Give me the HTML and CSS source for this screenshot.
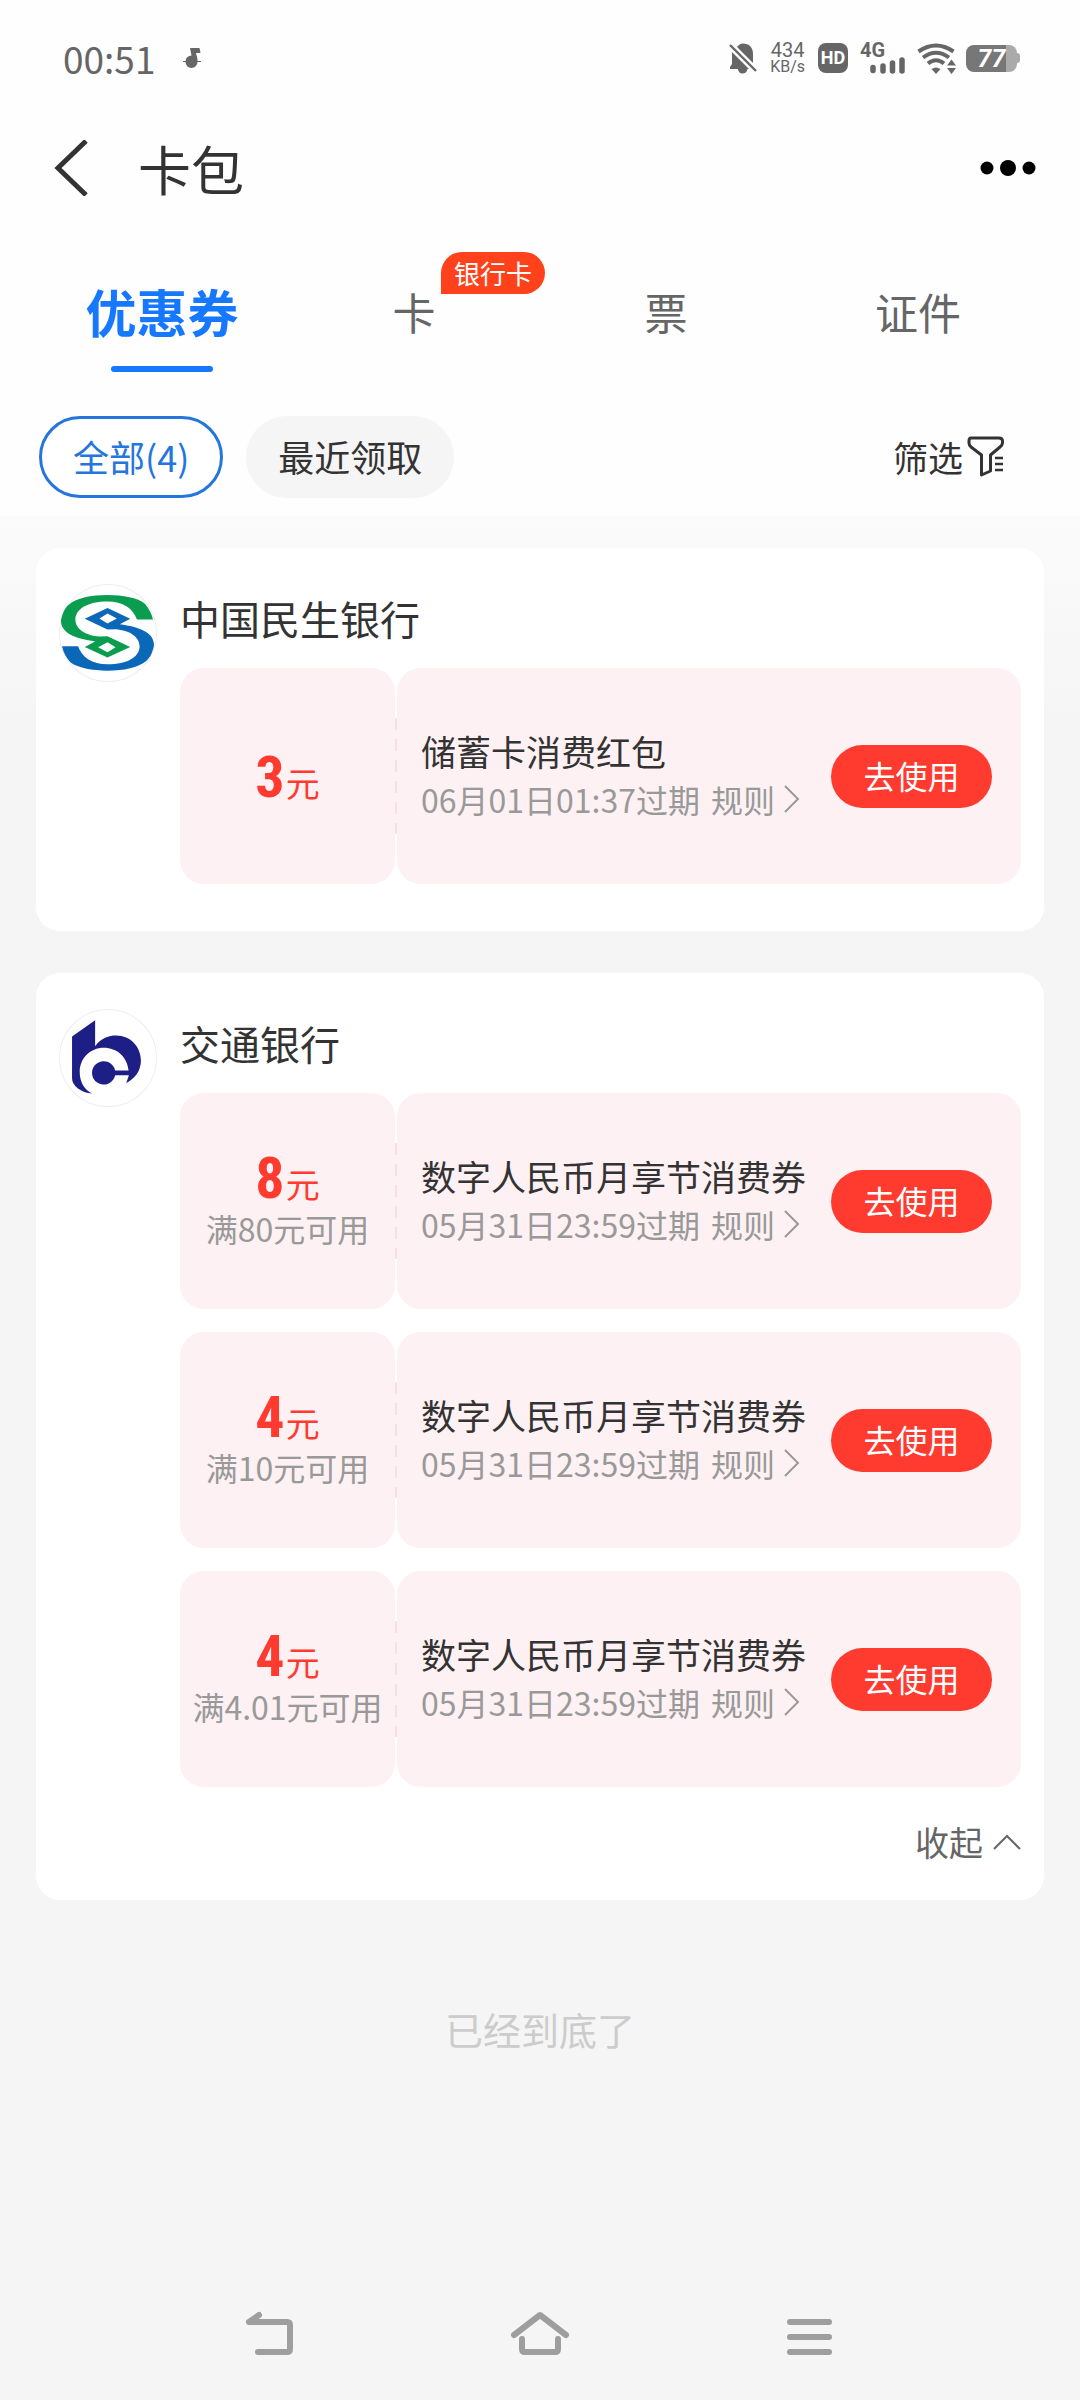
FILE: index.html
```html
<!DOCTYPE html>
<html lang="zh-CN">
<head>
<meta charset="utf-8">
<meta name="viewport" content="width=device-width, initial-scale=1">
<title>卡包</title>
<link rel="stylesheet" href="styles.css">
</head>
<body>
<div class="app">
  <div class="status">
    <span class="clock">00:51</span>
    <svg class="note" width="18" height="22" viewBox="0 0 18 22" aria-hidden="true"><path d="M7 1H16.500L17.500 6H13L14.500 12V14H18V15H14.500A6 6 0 0 1 2.500 15H0V14H2.500A6 6 0 0 1 8.500 8.500Z" fill="#666"/></svg>
    <div class="status-right">
      <svg width="28" height="31" viewBox="0 0 28 31" aria-hidden="true"><path d="M8 4C10 2 11 .5 14 .5c6 0 10 4 10 10V20ZM3 9 20 26h-1.500c-.6 3-2.500 4.500-5 4.500S9.500 29 8.800 26H1v-2l2-3Z" fill="#666"/><path d="M3 1.500 28 26.500" stroke="#fefefe" stroke-width="2"/><path d="M1 2 27 28" stroke="#666" stroke-width="2.400"/></svg>
      <span class="speed"><span class="speed-num">434</span><span class="speed-unit">KB/s</span></span>
      <span class="hd">HD</span>
      <span class="cell"><span class="net">4G</span><svg width="35" height="17" viewBox="0 0 35 17" aria-hidden="true"><path d="M3 10.500v3M13 9v5M22.500 6v8M32 3v11" stroke="#666" stroke-width="5.500" stroke-linecap="round"/></svg></span>
      <svg class="wifi" width="40" height="31" viewBox="0 0 40 31" aria-hidden="true"><g fill="none" stroke="#666" stroke-width="4"><path d="M1.500 8.500Q19 -3.500 36.500 8.500"/><path d="M6 14.500Q19 5 32 14.500"/><path d="M11 20.500Q19 14 27 20.500"/></g><path d="M14.500 26q4.500-3 9 0L19 31ZM30 22.500l4.500-6 4.500 6ZM30 25h9l-4.500 6Z" fill="#666"/></svg>
      <span class="battery"><span class="battery-body">77</span></span>
    </div>
  </div>

  <header class="bar">
    <button class="icon-btn" aria-label="返回"><svg width="36" height="56" viewBox="0 0 36 56"><path d="M33 1 5 28 33 55" fill="none" stroke="#333" stroke-width="5"/></svg></button>
    <h1>卡包</h1>
    <button class="icon-btn more" aria-label="更多"><svg width="56" height="18" viewBox="0 0 56 18"><circle cx="7" cy="9" r="6.500"/><circle cx="28" cy="9" r="8"/><circle cx="49" cy="9" r="6.500"/></svg></button>
  </header>

  <nav class="tabs">
    <button class="tab active">优惠券</button>
    <button class="tab">卡<span class="badge">银行卡</span></button>
    <button class="tab">票</button>
    <button class="tab">证件</button>
  </nav>

  <div class="filters">
    <button class="pill selected">全部(4)</button>
    <button class="pill">最近领取</button>
    <button class="filter">筛选<svg width="38" height="42" viewBox="0 0 38 42" aria-hidden="true"><path d="M4 2H32Q35.500 2 35.500 5V7Q35.500 9 33 11L23.500 19V35L14.500 39V19L4 11Q2 9 2 7V5Q2 2 4 2Z" fill="none" stroke="#333" stroke-width="3" stroke-linejoin="round"/><path d="M28 22h8M28 28h8M28 34h8" stroke="#333" stroke-width="2.600"/></svg></button>
  </div>

  <main>
    <section class="card">
      <svg class="logo" viewBox="89 132 293 293" role="img" aria-label="中国民生银行">
        <defs><g id="half"><path d="M370 238H322C310 204 280 184 234 184C175 184 138 206 138 238C138 266 168 286 210 289L234 288 302 320 234 352 166 320 197 304C140 296 93 280 95 240C100 218 106 204 118 194C142 174 185 165 234 165C280 165 325 174 345 190C357 203 366 220 370 238ZM206 321 234 336 258 321 234 306Z" fill-rule="evenodd"/></g></defs>
        <circle cx="235.500" cy="278.500" r="145" fill="#fff" stroke="#eee" stroke-width="3"/>
        <use href="#half" fill="#0a9d50"/>
        <use href="#half" fill="#0b68b8" transform="rotate(180 234 278)"/>
      </svg>
      <div class="content">
        <h2>中国民生银行</h2>
        <ul class="coupons">
          <li class="coupon">
            <div class="value"><p class="amount"><b>3</b>元</p></div>
            <div class="divider"></div>
            <div class="detail">
              <div class="text"><h3>储蓄卡消费红包</h3><p class="meta">06月01日01:37过期<a href="#">规则<svg width="16" height="28" viewBox="0 0 16 28"><path d="M1 1 14 14 1 27"/></svg></a></p></div>
              <button class="use">去使用</button>
            </div>
          </li>
        </ul>
      </div>
    </section>

    <section class="card">
      <svg class="logo" viewBox="89 147 293 293" role="img" aria-label="交通银行">
        <circle cx="235.500" cy="293.500" r="145" fill="#fff" stroke="#eee" stroke-width="3"/>
        <path d="M128 229 197 181V258C215 233 238 226 260 226C303 226 334 260 334 301C334 335 312 358 290 368L298 345H257A35 35 0 1 1 257 331H297C293 290 262 263 223 263C182 263 151 295 151 335C151 365 165 388 188 400C155 398 128 376 128 355Z" fill="#1d1f87"/>
      </svg>
      <div class="content">
        <h2>交通银行</h2>
        <ul class="coupons">
          <li class="coupon">
            <div class="value"><p class="amount"><b>8</b>元</p><p class="limit">满80元可用</p></div>
            <div class="divider"></div>
            <div class="detail">
              <div class="text"><h3>数字人民币月享节消费券</h3><p class="meta">05月31日23:59过期<a href="#">规则<svg width="16" height="28" viewBox="0 0 16 28"><path d="M1 1 14 14 1 27"/></svg></a></p></div>
              <button class="use">去使用</button>
            </div>
          </li>
          <li class="coupon">
            <div class="value"><p class="amount"><b>4</b>元</p><p class="limit">满10元可用</p></div>
            <div class="divider"></div>
            <div class="detail">
              <div class="text"><h3>数字人民币月享节消费券</h3><p class="meta">05月31日23:59过期<a href="#">规则<svg width="16" height="28" viewBox="0 0 16 28"><path d="M1 1 14 14 1 27"/></svg></a></p></div>
              <button class="use">去使用</button>
            </div>
          </li>
          <li class="coupon">
            <div class="value"><p class="amount"><b>4</b>元</p><p class="limit">满4.01元可用</p></div>
            <div class="divider"></div>
            <div class="detail">
              <div class="text"><h3>数字人民币月享节消费券</h3><p class="meta">05月31日23:59过期<a href="#">规则<svg width="16" height="28" viewBox="0 0 16 28"><path d="M1 1 14 14 1 27"/></svg></a></p></div>
              <button class="use">去使用</button>
            </div>
          </li>
        </ul>
        <button class="collapse">收起<svg width="28" height="16" viewBox="0 0 28 16" aria-hidden="true"><path d="M1 15 14 2 27 15" fill="none" stroke="#666" stroke-width="2"/></svg></button>
      </div>
    </section>

    <p class="end">已经到底了</p>
  </main>

  <nav class="system">
    <button class="icon-btn" aria-label="返回"><svg width="50" height="46" viewBox="0 0 50 46"><path d="M14 4 4 11H42Q45 11 45 14V38Q45 41 42 41H13"/></svg></button>
    <button class="icon-btn" aria-label="主页"><svg width="60" height="46" viewBox="0 0 60 46"><path d="M4 24 30 4 56 24M12 28V38Q12 41 15 41H45Q48 41 48 38V28"/></svg></button>
    <button class="icon-btn" aria-label="任务"><svg width="48" height="46" viewBox="0 0 48 46"><path d="M4 11H43M4 26H43M4 41H43"/></svg></button>
  </nav>
</div>
</body>
</html>
```
FILE: styles.css
```css
* { box-sizing: border-box; margin: 0; padding: 0; }

body {
  background: #f5f5f5;
  color: #333;
  font-family: "Noto Sans CJK SC", sans-serif;
}

button {
  background: none;
  border: 0;
  color: inherit;
  font: inherit;
  cursor: pointer;
}

svg { display: block; flex: none; }

.app { display: flex; flex-direction: column; min-height: 100vh; }

.status, .bar, .tabs, .filters { background: #fefefe; }

/* status bar */
.status {
  display: flex;
  align-items: center;
  height: 120px;
  padding: 0 60px 4px 63px;
  color: #666;
}
.clock { font-size: 37px; line-height: 44px; }
.note { margin-left: 28px; }
.status-right { display: flex; align-items: center; margin-left: auto; }
.speed {
  display: flex;
  flex-direction: column;
  align-items: center;
  margin: 0 13px;
  font-family: Roboto, sans-serif;
}
.speed-num { font-size: 20px; line-height: 18px; }
.speed-unit { font-size: 16px; line-height: 16px; }
.hd {
  width: 30px;
  border-radius: 8px;
  background: #666;
  color: #fff;
  font: 700 18px/30px Roboto, sans-serif;
  text-align: center;
}
.cell { display: flex; flex-direction: column; margin: 0 12px; }
.net { font: 700 20px/14px Roboto, sans-serif; }
.cell svg { align-self: flex-end; margin-left: 10px; }
.wifi { margin-right: 9px; }
.battery { display: flex; align-items: center; }
.battery-body {
  width: 51px;
  border-radius: 8px;
  background: linear-gradient(90deg, #777 78%, #aaa 78%);
  color: #fff;
  font: italic 700 25px/27px Roboto, sans-serif;
  text-align: center;
}
.battery::after {
  content: "";
  width: 3px;
  height: 10px;
  border-radius: 0 3px 3px 0;
  background: #aaa;
}

/* title bar */
.bar { display: flex; align-items: center; height: 96px; padding: 0 44px 0 53px; }
.bar h1 { margin-left: 49px; font-size: 53px; font-weight: 400; line-height: 72px; }
.more { margin-left: auto; }

/* tabs */
.tabs { display: grid; grid-template-columns: repeat(4, 1fr); height: 192px; padding: 0 36px; }
.tab { position: relative; padding-bottom: 3px; color: #666; font-size: 43px; }
.tab.active { color: #1677ff; font-size: 51px; font-weight: 700; }
.tab.active::after {
  content: "";
  position: absolute;
  bottom: 36px;
  left: calc(50% - 51px);
  width: 102px;
  height: 6px;
  border-radius: 3px;
  background: #1677ff;
}
.badge {
  position: absolute;
  top: 36px;
  left: calc(50% + 27px);
  padding: 0 13px;
  border-radius: 21px 21px 21px 0;
  background: #ff411c;
  color: #fff;
  font-size: 26px;
  line-height: 42px;
  white-space: nowrap;
}

/* filters */
.filters { display: flex; align-items: center; gap: 23px; padding: 8px 75px 18px 39px; }
.pill {
  height: 82px;
  padding: 0 32px 3px;
  border-radius: 41px;
  background: #f5f5f5;
  font-size: 36px;
}
.pill.selected { padding: 0 31px 3px; border: 3px solid #2475dc; background: #fff; color: #2475dc; }
.filter { display: flex; align-items: center; gap: 4px; margin-left: auto; font-size: 35px; line-height: 48px; }

/* coupon cards */
main {
  padding: 32px 36px 0;
  background: linear-gradient(#fbfbfb, #f5f5f5 210px);
}
.card {
  display: flex;
  align-items: flex-start;
  gap: 23px;
  margin-bottom: 42px;
  padding: 36px 23px 47px;
  border-radius: 24px;
  background: #fff;
}
.logo { width: 98px; height: 98px; }
.content { flex: 1; min-width: 0; }
.card h2 { margin: 6px 0 22px; font-size: 40px; font-weight: 400; line-height: 56px; }
.coupons { display: grid; gap: 23px; list-style: none; }
.coupon { display: flex; height: 216px; }
.value, .detail { border-radius: 24px; background: #fef1f3; }
.value {
  display: flex;
  flex: 0 0 215px;
  flex-direction: column;
  align-items: center;
  justify-content: center;
}
.amount { display: flex; align-items: baseline; gap: 1px; padding-top: 4px; color: #ff3b30; font-size: 34px; line-height: 40px; }
.amount b { font: 700 58px/48px "Roboto Condensed", "Liberation Sans Narrow", Roboto, sans-serif; }
.limit { color: #999; font-size: 32px; line-height: 48px; }
.divider {
  align-self: center;
  width: 2px;
  height: 116px;
  background: repeating-linear-gradient(#fadfe2 0 12px, #fef1f3 12px 21px);
}
.detail {
  display: flex;
  flex: 1;
  align-items: center;
  justify-content: space-between;
  min-width: 0;
  padding: 0 29px 0 24px;
}
.text { padding-bottom: 3px; }
.detail h3 { font-size: 35px; font-weight: 400; line-height: 48px; white-space: nowrap; }
.meta, .meta a { display: flex; align-items: center; color: #999; text-decoration: none; }
.meta { gap: 11px; font-size: 32px; line-height: 48px; white-space: nowrap; }
.meta a { gap: 9px; }
.meta path { fill: none; stroke: #999; stroke-width: 2; }
.use {
  flex: none;
  width: 161px;
  height: 63px;
  padding-bottom: 3px;
  border-radius: 32px;
  background: #ff3b30;
  color: #fff;
  font-size: 32px;
}
.collapse {
  display: flex;
  align-items: center;
  gap: 10px;
  margin: 31px 0 -13px auto;
  color: #666;
  font-size: 34px;
  line-height: 48px;
}
.end { padding-top: 59px; color: #ccc; font-size: 38px; line-height: 56px; text-align: center; }

/* system navigation */
.system {
  display: grid;
  grid-template-columns: repeat(3, 1fr);
  align-items: center;
  height: 132px;
  margin-top: auto;
  padding: 0 135px;
}
.icon-btn { display: flex; justify-content: center; }
.system path {
  fill: none;
  stroke: #9e9e9e;
  stroke-width: 6;
  stroke-linecap: round;
  stroke-linejoin: round;
}
```
